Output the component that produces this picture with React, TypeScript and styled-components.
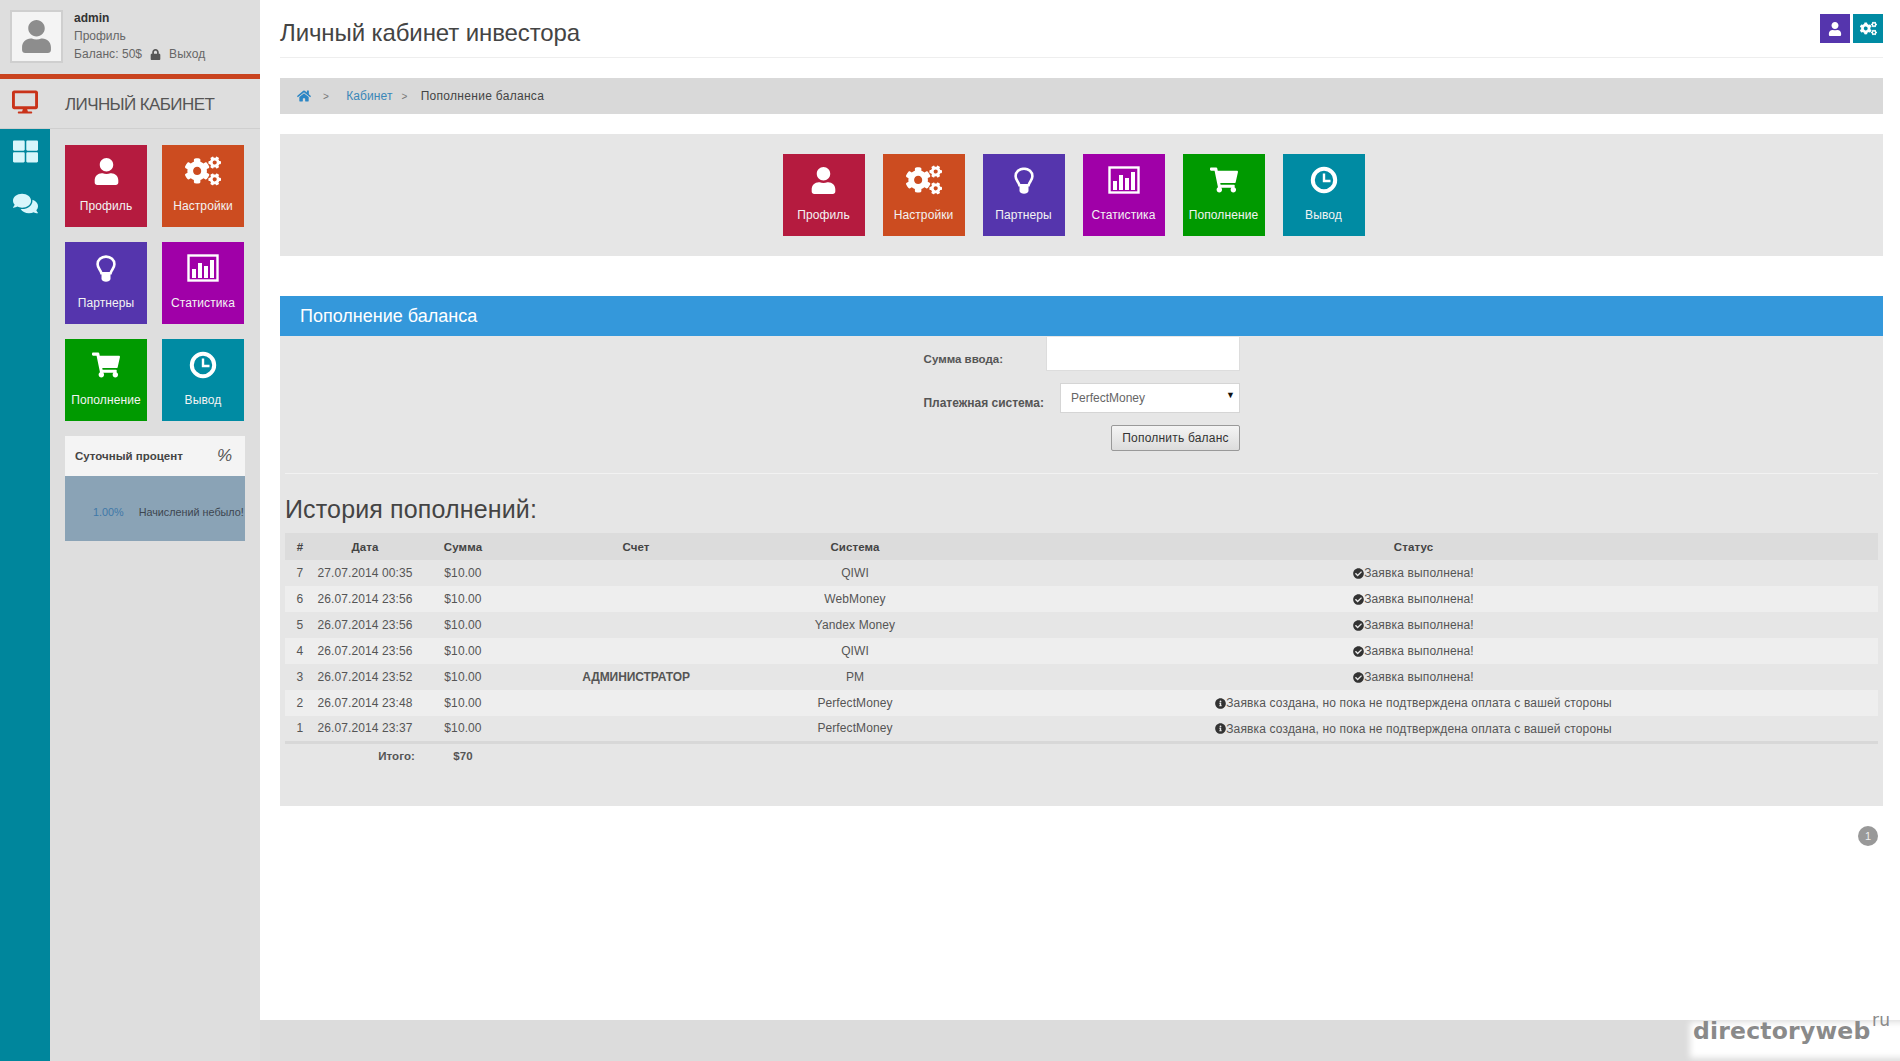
import React from 'react';
import styled, { createGlobalStyle } from 'styled-components';
import {
  FaUser,
  FaCogs,
  FaShoppingCart,
  FaHome,
  FaLock,
  FaDesktop,
  FaThLarge,
  FaComments,
  FaCheckCircle,
  FaInfoCircle,
} from 'react-icons/fa';

const GlobalStyle = createGlobalStyle`
  html, body {
    margin: 0;
    padding: 0;
    background: #fff;
    overflow: hidden;
  }
  body {
    font-family: "Liberation Sans", Arial, sans-serif;
    font-size: 12px;
    color: #444;
  }
  * { box-sizing: border-box; }
`;

const Page = styled.div`
  display: flex;
  width: 1900px;
  height: 1061px;
  position: relative;
`;

/* sidebar */
const Sidebar = styled.aside`
  width: 260px;
  flex-shrink: 0;
  display: flex;
  flex-direction: column;
  background: #dedede;
`;

const UserBox = styled.div`
  height: 79px;
  padding: 10px 0 0 10px;
  display: flex;
  gap: 11px;
  border-bottom: 5px solid #c9431f;
`;

const Avatar = styled.div`
  width: 53px;
  height: 53px;
  background: #f4f4f4;
  border: 2px solid #cfcfcf;
  display: flex;
  align-items: center;
  justify-content: center;
  color: #8d8d8d;
  font-size: 33px;
`;

const UserInfo = styled.div`
  display: flex;
  flex-direction: column;
  color: #666;
  font-size: 12px;
  line-height: 18px;
  margin-top: -1px;
`;

const UserName = styled.b`
  color: #333;
`;

const BalanceRow = styled.div`
  display: flex;
  align-items: center;
  gap: 8px;
  letter-spacing: 0.05px;
  color: #666;
  svg {
    color: #555;
    font-size: 11px;
  }
`;

const NavHead = styled.div`
  height: 50px;
  display: flex;
  align-items: center;
  padding-left: 12px;
  gap: 27px;
  border-bottom: 1px solid #cfcfcf;
  color: #c9331a;
  font-size: 26px;
  svg {
    margin-top: -4px;
  }
`;

const NavTitle = styled.span`
  color: #555;
  font-size: 17px;
  letter-spacing: -0.6px;
  margin-top: 3px;
`;

const SideBody = styled.div`
  flex: 1;
  display: flex;
`;

const Rail = styled.nav`
  width: 50px;
  background: #00869c;
  color: #d8f6fb;
  display: flex;
  flex-direction: column;
  align-items: center;
  padding-top: 10px;
  gap: 27px;
  font-size: 25px;
  svg { display: block; }
`;

const SideMenu = styled.div`
  padding: 16px 0 0 15px;
`;

const TileGrid = styled.div`
  display: grid;
  grid-template-columns: 82px 82px;
  gap: 15px;
`;

const TileBox = styled.a<{ $bg: string }>`
  width: 82px;
  height: 82px;
  background: ${({ $bg }) => $bg};
  color: #fff;
  display: grid;
  grid-template-rows: 51px 20px;
  justify-items: center;
  align-items: center;
  text-decoration: none;
`;

const TileIcon = styled.span`
  display: flex;
  font-size: 30px;
  margin-top: 1px;
`;

const TileLabel = styled.span`
  font-size: 12px;
  letter-spacing: 0.1px;
  white-space: nowrap;
  color: #f3f3f3;
`;

const PercentCard = styled.div`
  width: 180px;
  margin-top: 15px;
`;

const PercentHead = styled.div`
  height: 40px;
  background: #f4f4f4;
  display: flex;
  align-items: center;
  justify-content: space-between;
  padding: 0 13px 0 10px;
  font-size: 11.5px;
  font-weight: bold;
  color: #444;
`;

const PercentSign = styled.span`
  font-size: 17px;
  font-weight: normal;
  font-style: italic;
  color: #555;
`;

const PercentBody = styled.div`
  height: 65px;
  background: #8aa3b6;
  display: flex;
  align-items: center;
  padding: 6px 0 0 28px;
  gap: 15px;
  font-size: 10.8px;
  white-space: nowrap;
`;

const PercentValue = styled.span`
  color: #3f78a8;
`;

const PercentNote = styled.span`
  color: #3d4650;
`;

/* main */
const Main = styled.main`
  flex: 1;
  display: flex;
  flex-direction: column;
  min-width: 0;
`;

const Content = styled.div`
  flex: 1;
  padding: 0 17px 0 20px;
`;

const TopBar = styled.header`
  height: 58px;
  border-bottom: 1px solid #eee;
  display: flex;
  justify-content: space-between;
  padding-top: 14px;
`;

const PageTitle = styled.h1`
  margin: 0;
  font-size: 24px;
  font-weight: normal;
  line-height: 38px;
  color: #444;
  letter-spacing: -0.1px;
`;

const TopButtons = styled.div`
  display: flex;
  gap: 3px;
`;

const TopButton = styled.a<{ $bg: string }>`
  width: 30px;
  height: 29px;
  background: ${({ $bg }) => $bg};
  color: #fff;
  display: flex;
  align-items: center;
  justify-content: center;
  font-size: 14px;
`;

const Breadcrumb = styled.div`
  margin-top: 20px;
  height: 36px;
  background: #d9d9d9;
  display: flex;
  align-items: center;
  padding-left: 17px;
  font-size: 12px;
  color: #444;
  letter-spacing: 0.3px;
`;

const CrumbHome = styled.span`
  display: flex;
  color: #2b86c5;
  font-size: 14px;
`;

const CrumbLink = styled.a`
  color: #3a87b8;
  letter-spacing: 0.1px;
`;

const CrumbSep = styled.span<{ $left: number; $right: number }>`
  color: #777;
  font-size: 10px;
  margin: 0 ${({ $right }) => $right}px 0 ${({ $left }) => $left}px;
`;

const IconPanel = styled.section`
  margin-top: 20px;
  height: 122px;
  background: #e6e6e6;
  display: flex;
  justify-content: center;
  gap: 18px;
  padding: 20px 16px 0 0;
`;

const SectionBar = styled.h2`
  margin: 40px 0 0;
  height: 40px;
  background: #3498db;
  color: #fff;
  font-size: 18px;
  font-weight: normal;
  line-height: 40px;
  padding-left: 20px;
`;

const SectionBody = styled.section`
  height: 470px;
  background: #e6e6e6;
  padding: 1px 5px 0;
`;

const PayForm = styled.form`
  display: flex;
  flex-direction: column;
  align-items: flex-end;
  padding-right: 638px;
  height: 137px;
  border-bottom: 1px solid #f2f2f2;
`;

const FormRow = styled.div<{ $gap: number; $top: number }>`
  display: flex;
  align-items: center;
  gap: ${({ $gap }) => $gap}px;
  margin-top: ${({ $top }) => $top}px;
`;

const FieldLabel = styled.label<{ $size: number }>`
  font-size: ${({ $size }) => $size}px;
  font-weight: bold;
  color: #555;
  white-space: nowrap;
  margin-top: 9px;
`;

const AmountInput = styled.input`
  width: 194px;
  height: 34px;
  background: #fff;
  border: 1px solid #ddd;
  border-top: none;
  outline: none;
`;

const SelectWrap = styled.div`
  position: relative;
  width: 180px;
  height: 30px;
`;

const PaySelect = styled.select`
  width: 100%;
  height: 100%;
  appearance: none;
  background: #fff;
  border: 1px solid #d5d5d5;
  padding: 0 0 0 10px;
  font-family: inherit;
  font-size: 12px;
  color: #666;
`;

const SelectArrow = styled.span`
  position: absolute;
  right: 5px;
  top: 7px;
  font-size: 9px;
  color: #111;
  pointer-events: none;
`;

const SubmitButton = styled.button`
  width: 129px;
  height: 26px;
  margin-top: 12px;
  background: linear-gradient(#f4f4f4, #dcdcdc);
  border: 1px solid #999;
  border-radius: 2px;
  font-family: inherit;
  font-size: 12px;
  letter-spacing: 0.2px;
  color: #333;
  padding: 0;
`;

const HistoryTitle = styled.h3`
  margin: 18px 0 0;
  height: 41px;
  font-size: 25px;
  font-weight: normal;
  line-height: 34px;
  letter-spacing: 0.15px;
  color: #444;
`;

const HistoryTable = styled.table`
  width: 100%;
  border-collapse: collapse;
  table-layout: fixed;
  font-size: 12px;
  color: #555;
  th, td {
    padding: 0;
    height: 26px;
    text-align: center;
    white-space: nowrap;
    letter-spacing: 0.1px;
  }
  th {
    height: 27px;
    background: #dcdcdc;
    color: #444;
    font-weight: bold;
    font-size: 11.5px;
  }
  tbody tr:nth-child(odd) td { background: #e6e6e6; }
  tbody tr:nth-child(even) td { background: #eeeeee; }
  tfoot td {
    border-top: 3px solid #d8d8d8;
    font-weight: bold;
    font-size: 11.5px;
    height: 27px;
    color: #555;
  }
  b { letter-spacing: -0.08px; }
`;

const TotalLabel = styled.td`
  && {
    text-align: right;
  }
`;

const StatusText = styled.span`
  display: inline-flex;
  align-items: center;
  letter-spacing: 0.15px;
  vertical-align: middle;
  svg {
    color: #333;
    font-size: 11px;
  }
`;

const Pager = styled.div`
  display: flex;
  justify-content: flex-end;
  margin-top: 20px;
  padding-right: 5px;
`;

const PagerDot = styled.span`
  width: 20px;
  height: 20px;
  border-radius: 50%;
  background: #999;
  color: #eee;
  font-size: 11px;
  display: flex;
  align-items: center;
  justify-content: center;
`;

const Footer = styled.footer`
  height: 41px;
  background: #dcdcdc;
  position: relative;
`;

const WatermarkGlow = styled.div`
  position: absolute;
  left: 1430px;
  right: -20px;
  top: 2px;
  height: 36px;
  background: #fff;
  filter: blur(3px);
`;

const Watermark = styled.div`
  position: absolute;
  left: 1433px;
  top: -4px;
  font-family: "DejaVu Sans", sans-serif;
  font-weight: bold;
  font-size: 23.5px;
  letter-spacing: 0.2px;
  line-height: 30px;
  color: #8a8a8a;
  white-space: nowrap;
`;

const WatermarkTld = styled.span`
  position: absolute;
  left: 179px;
  top: -11px;
  font-size: 17px;
  font-weight: normal;
`;

/* icons with no close match in the packages */
const ChartIcon = () => (
  <svg width="32" height="28" viewBox="0 0 32 28">
    <rect x="1.5" y="1.5" width="29" height="25" fill="none" stroke="currentColor" strokeWidth="2.4" />
    <rect x="5" y="15" width="4" height="9" fill="currentColor" />
    <rect x="11" y="9" width="4" height="15" fill="currentColor" />
    <rect x="17" y="12" width="4" height="12" fill="currentColor" />
    <rect x="23" y="6" width="4" height="18" fill="currentColor" />
  </svg>
);

const ClockIcon = () => (
  <svg width="28" height="28" viewBox="0 0 28 28">
    <circle cx="14" cy="14" r="11.2" fill="none" stroke="currentColor" strokeWidth="4" />
    <path d="M14 7.5V15H20.5" fill="none" stroke="currentColor" strokeWidth="2.4" />
  </svg>
);

const BulbIcon = () => (
  <svg width="20" height="27" viewBox="0 0 20 27">
    <path
      d="M10 1.6C5.2 1.6 1.6 5 1.6 9.2c0 4 3 5.6 3.8 9h9.2c.8-3.4 3.8-5 3.8-9C18.400 5 14.800 1.600 10 1.600z"
      fill="none"
      stroke="currentColor"
      strokeWidth="2.6"
    />
    <path d="M5.500 18.500h9V24c0 1.600-2.500 2.800-4.500 2.800S5.500 25.600 5.500 24z" fill="currentColor" />
  </svg>
);

interface TileItem {
  label: string;
  bg: string;
  icon: React.ReactNode;
}

const TILES: TileItem[] = [
  { label: 'Профиль', bg: '#b51b3f', icon: <FaUser size={27} /> },
  { label: 'Настройки', bg: '#cc4c20', icon: <FaCogs size={36} /> },
  { label: 'Партнеры', bg: '#5535ad', icon: <BulbIcon /> },
  { label: 'Статистика', bg: '#a000a8', icon: <ChartIcon /> },
  { label: 'Пополнение', bg: '#009a00', icon: <FaShoppingCart size={28} /> },
  { label: 'Вывод', bg: '#008ba3', icon: <ClockIcon /> },
];

const DONE = 'Заявка выполнена!';
const PENDING = 'Заявка создана, но пока не подтверждена оплата с вашей стороны';

const ROWS = [
  { id: 7, date: '27.07.2014 00:35', account: '', system: 'QIWI', status: DONE },
  { id: 6, date: '26.07.2014 23:56', account: '', system: 'WebMoney', status: DONE },
  { id: 5, date: '26.07.2014 23:56', account: '', system: 'Yandex Money', status: DONE },
  { id: 4, date: '26.07.2014 23:56', account: '', system: 'QIWI', status: DONE },
  { id: 3, date: '26.07.2014 23:52', account: 'АДМИНИСТРАТОР', system: 'PM', status: DONE },
  { id: 2, date: '26.07.2014 23:48', account: '', system: 'PerfectMoney', status: PENDING },
  { id: 1, date: '26.07.2014 23:37', account: '', system: 'PerfectMoney', status: PENDING },
];

const Tile: React.FC<{ item: TileItem }> = ({ item }) => (
  <TileBox $bg={item.bg}>
    <TileIcon>{item.icon}</TileIcon>
    <TileLabel>{item.label}</TileLabel>
  </TileBox>
);

const App: React.FC = () => (
  <Page>
    <GlobalStyle />
    <Sidebar>
      <UserBox>
        <Avatar>
          <FaUser />
        </Avatar>
        <UserInfo>
          <UserName>admin</UserName>
          <span>Профиль</span>
          <BalanceRow>
            Баланс: 50$ <FaLock /> Выход
          </BalanceRow>
        </UserInfo>
      </UserBox>
      <NavHead>
        <FaDesktop />
        <NavTitle>ЛИЧНЫЙ КАБИНЕТ</NavTitle>
      </NavHead>
      <SideBody>
        <Rail>
          <FaThLarge />
          <FaComments />
        </Rail>
        <SideMenu>
          <TileGrid>
            {TILES.map((item) => (
              <Tile key={item.label} item={item} />
            ))}
          </TileGrid>
          <PercentCard>
            <PercentHead>
              Суточный процент
              <PercentSign>%</PercentSign>
            </PercentHead>
            <PercentBody>
              <PercentValue>1.00%</PercentValue>
              <PercentNote>Начислений небыло!</PercentNote>
            </PercentBody>
          </PercentCard>
        </SideMenu>
      </SideBody>
    </Sidebar>

    <Main>
      <Content>
        <TopBar>
          <PageTitle>Личный кабинет инвестора</PageTitle>
          <TopButtons>
            <TopButton $bg="#5535ad">
              <FaUser />
            </TopButton>
            <TopButton $bg="#008ba3">
              <FaCogs size={17} />
            </TopButton>
          </TopButtons>
        </TopBar>

        <Breadcrumb>
          <CrumbHome>
            <FaHome />
          </CrumbHome>
          <CrumbSep $left={12} $right={17}>&gt;</CrumbSep>
          <CrumbLink>Кабинет</CrumbLink>
          <CrumbSep $left={9} $right={13}>&gt;</CrumbSep>
          Пополнение баланса
        </Breadcrumb>

        <IconPanel>
          {TILES.map((item) => (
            <Tile key={item.label} item={item} />
          ))}
        </IconPanel>

        <SectionBar>Пополнение баланса</SectionBar>
        <SectionBody>
          <PayForm>
            <FormRow $gap={43} $top={0}>
              <FieldLabel $size={11.5}>Сумма ввода:</FieldLabel>
              <AmountInput />
            </FormRow>
            <FormRow $gap={16} $top={12}>
              <FieldLabel $size={12}>Платежная система:</FieldLabel>
              <SelectWrap>
                <PaySelect defaultValue="PerfectMoney">
                  <option>PerfectMoney</option>
                </PaySelect>
                <SelectArrow>▼</SelectArrow>
              </SelectWrap>
            </FormRow>
            <SubmitButton type="button">Пополнить баланс</SubmitButton>
          </PayForm>

          <HistoryTitle>История пополнений:</HistoryTitle>
          <HistoryTable>
            <colgroup>
              <col style={{ width: 30 }} />
              <col style={{ width: 100 }} />
              <col style={{ width: 96 }} />
              <col style={{ width: 250 }} />
              <col style={{ width: 188 }} />
              <col />
            </colgroup>
            <thead>
              <tr>
                <th>#</th>
                <th>Дата</th>
                <th>Сумма</th>
                <th>Счет</th>
                <th>Система</th>
                <th>Статус</th>
              </tr>
            </thead>
            <tbody>
              {ROWS.map((row) => (
                <tr key={row.id}>
                  <td>{row.id}</td>
                  <td>{row.date}</td>
                  <td>$10.00</td>
                  <td>{row.account && <b>{row.account}</b>}</td>
                  <td>{row.system}</td>
                  <td>
                    <StatusText>
                      {row.status === DONE ? <FaCheckCircle /> : <FaInfoCircle />}
                      {row.status}
                    </StatusText>
                  </td>
                </tr>
              ))}
            </tbody>
            <tfoot>
              <tr>
                <TotalLabel colSpan={2}>Итого:</TotalLabel>
                <td>$70</td>
                <td colSpan={3} />
              </tr>
            </tfoot>
          </HistoryTable>
        </SectionBody>

        <Pager>
          <PagerDot>1</PagerDot>
        </Pager>
      </Content>
      <Footer>
        <WatermarkGlow />
        <Watermark>
          directoryweb
          <WatermarkTld>ru</WatermarkTld>
        </Watermark>
      </Footer>
    </Main>
  </Page>
);

export default App;
